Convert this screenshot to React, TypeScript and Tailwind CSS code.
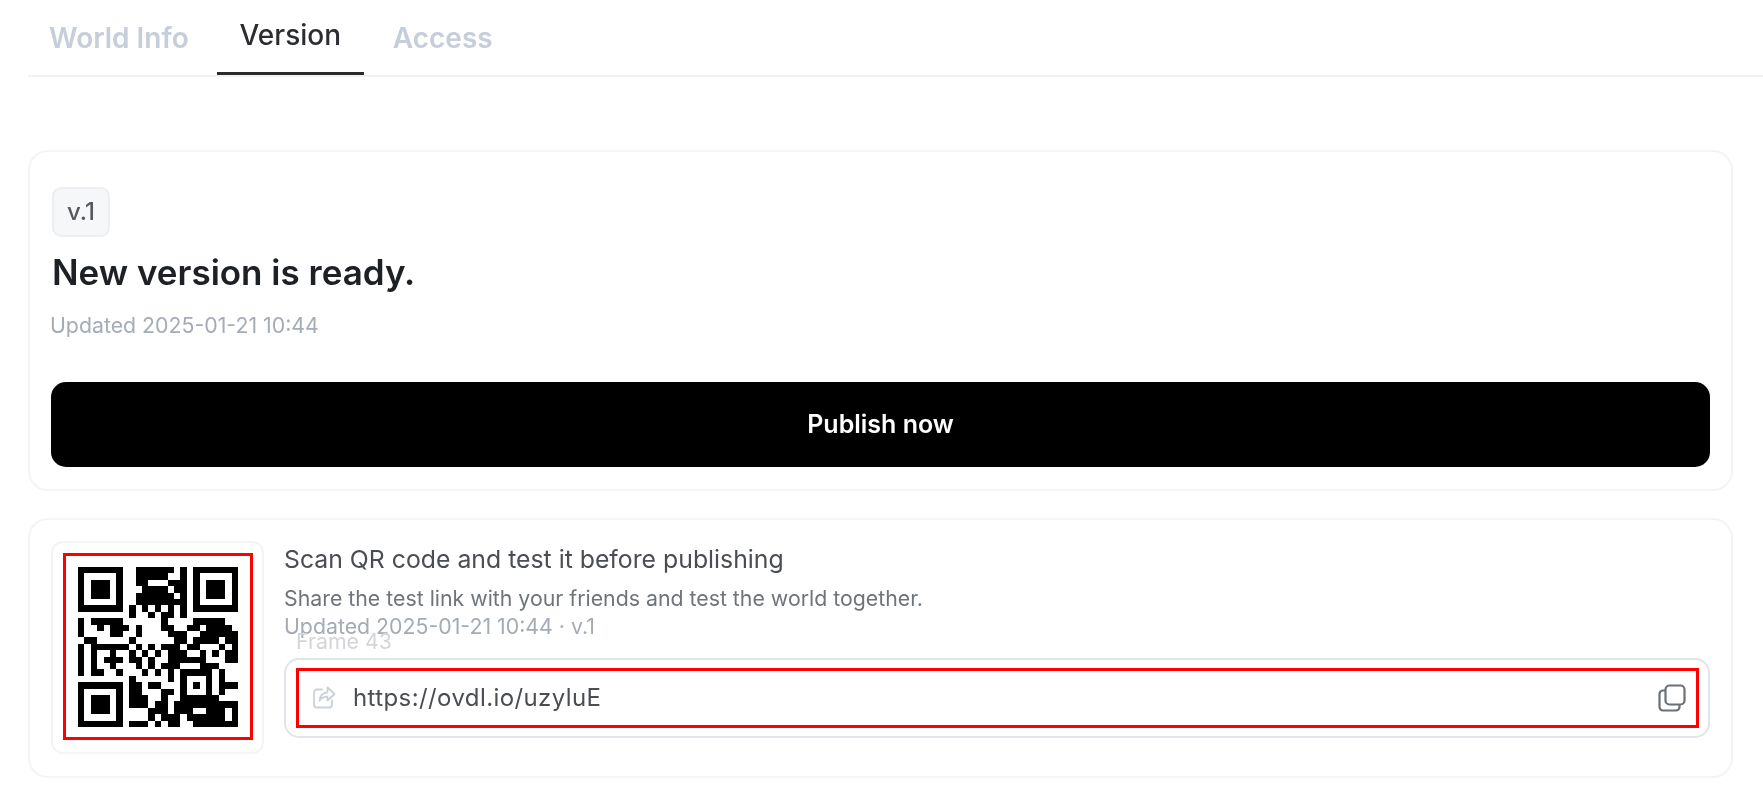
const rows = [
  "1111111001111110101111111",
  "1000001001111100101000001",
  "1011101001100011101011101",
  "1011101000111101101011101",
  "1011101001111110101011101",
  "1000001001111111101000001",
  "1111111010101010101111111",
  "0000000010010110100000000",
  "1011111000000100001111100",
  "1001011101000110011011110",
  "1000011001000011100111111",
  "0110000010000001101111011",
  "1011111101010111011000101",
  "1010010010101011100101011",
  "1010111011010011111100011",
  "1010010001010111000111000",
  "1011001000101010111110100",
  "0000000010000010100010100",
  "1111111011011000101010111",
  "1000001011000110100010100",
  "1011101011100100111111000",
  "1011101011101101111111111",
  "1011101000011101110011101",
  "1000001000010111011111101",
  "1111111011101011001111111",
];

function Qr() {
  return (
    <svg width="160" height="160" viewBox="0 0 25 25" shapeRendering="crispEdges" className="block">
      {rows.map((row, y) =>
        row.split("").map((c, x) => (c === "1" ? <rect key={`${x}-${y}`} x={x} y={y} width="1" height="1" fill="#000" /> : null)),
      )}
    </svg>
  );
}

function ShareIcon() {
  return (
    <svg width="26" height="26" viewBox="0 0 26 26" fill="none" stroke="#cbd1da" strokeWidth="1.8" strokeLinecap="round" strokeLinejoin="round">
      <path d="M11 4.500H6a3 3 0 0 0-3 3v12a3 3 0 0 0 3 3h12a3 3 0 0 0 3-3v-4" />
      <path d="M16.500 2.500 23.500 9l-7 6.500v-3.800c-3.600 0-6.200 1.200-8 4 .4-5 3.200-8 8-8.400V2.500Z" />
    </svg>
  );
}

function CopyIcon() {
  return (
    <svg width="28" height="28" viewBox="0 0 28 28" fill="none" stroke="#6b7076" strokeWidth="2.2" strokeLinejoin="round">
      <rect x="7.500" y="1.500" width="19" height="19" rx="4" />
      <path d="M7 6.500H5A3.500 3.500 0 0 0 1.500 10v13A3.500 3.500 0 0 0 5 26.500h13a3.500 3.500 0 0 0 3.500-3.500v-1.500" strokeLinecap="round" />
    </svg>
  );
}

export default function App() {
  return (
    <div className="h-[808px] w-[1763px] overflow-hidden bg-white pl-7 pr-[30px] font-['Inter',sans-serif] blur-[0.6px]">
      <div className="-mr-[30px] flex h-[77px] items-end border-b-2 border-[#f1f2f4] pl-[21px]">
        <div className="pb-[20px] text-[28px] leading-[33px] font-semibold text-[#c6ced9]">World Info</div>
        <div className="ml-[28px] w-[147px] border-b-[3px] border-[#2b2b2d] pb-[20px] text-center text-[28px] leading-[33px] font-medium text-[#2b2d30]">Version</div>
        <div className="ml-[29px] pb-[20px] text-[28px] leading-[33px] font-semibold text-[#c6ced9]">Access</div>
      </div>

      <div className="mt-[73px] flex h-[341px] flex-col rounded-[20px] border-2 border-[#f3f4f6] pt-[35px] pr-[21px] pl-[22px]">
        <div className="flex h-[50px] w-[58px] items-center justify-center rounded-[9px] border-2 border-[#eceef1] bg-[#f6f7f9] text-[24px] font-medium text-[#55595f]">v.1</div>
        <div className="mt-[15px] text-[35px] leading-[41px] font-semibold text-[#1d2024]">New version is ready.</div>
        <div className="mt-[17px] -ml-0.5 text-[21.300px] leading-[30px] text-[#a4acb7]">Updated 2025-01-21 10:44</div>
        <div className="mt-[42px] -ml-px flex h-[85px] items-center justify-center rounded-[15px] bg-black text-[25px] font-semibold text-white">Publish now</div>
      </div>

      <div className="mt-[27px] flex h-[260px] rounded-[20px] border-2 border-[#f3f4f6] pt-[21px] pr-[21px] pl-[21px]">
        <div className="flex h-[213px] w-[213px] shrink-0 items-center justify-center rounded-[12px] border-2 border-[#f3f4f6] pb-[2px]">
          <div className="flex h-[187px] w-[190px] items-center justify-center border-[3px] border-[#ff0000]">
            <Qr />
          </div>
        </div>
        <div className="relative ml-[20px] flex-1">
          <div className="text-[24.800px] leading-[36px] text-[#4a4d52]">Scan QR code and test it before publishing</div>
          <div className="mt-[7px] text-[21.300px] leading-[28px] text-[#6f747b]">Share the test link with your friends and test the world together.</div>
          <div className="text-[21.300px] leading-[28px] text-[#a3abb5]">Updated 2025-01-21 10:44 · v.1</div>
          <div className="absolute top-[86px] left-3 text-[21.300px] leading-[28px] text-[#d3d5d9]">Frame 43</div>
          <div className="mt-[18px] flex h-[80px] items-center rounded-[15px] border-2 border-[#e1e4e9] pr-[9px] pl-[10px]">
            <div className="flex h-[60px] flex-1 items-center border-[3px] border-[#ff0000] pr-2.5 pl-3">
              <ShareIcon />
              <span className="ml-[16px] flex-1 text-[24px] tracking-[0.4px] text-[#4a4d52]">https://ovdl.io/uzyluE</span>
              <CopyIcon />
            </div>
          </div>
        </div>
      </div>
    </div>
  );
}
